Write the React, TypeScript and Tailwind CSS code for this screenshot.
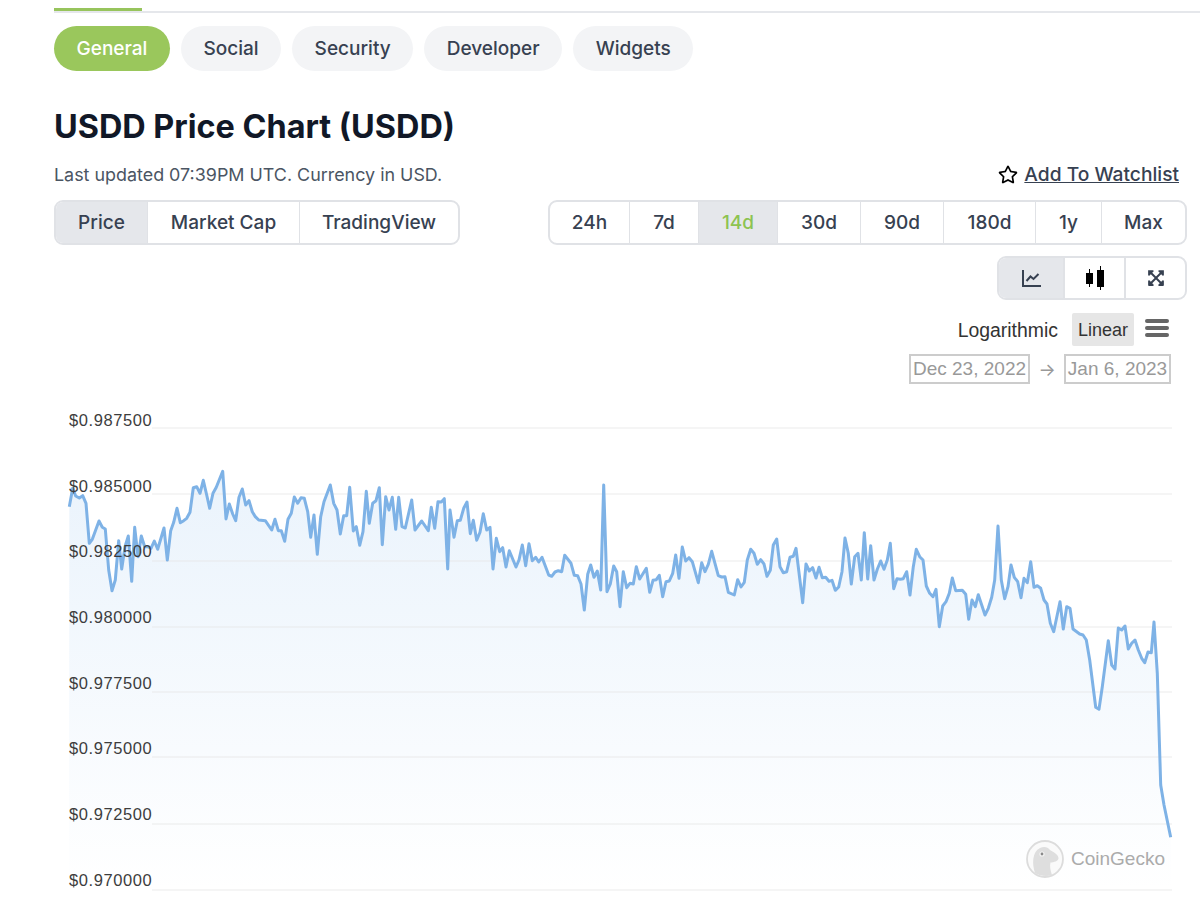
import React from "react";
import { FaRegStar, FaExpandArrowsAlt } from "react-icons/fa";

// points read off the reference at 3x, [x, y] pairs per crop
const seg1 = [58,320,68,265,77,288,88,294,98,287,108,310,118,430,127,418,137,390,147,363,157,382,166,387,176,510,186,572,196,540,206,422,215,507,225,440,235,408,245,544,254,382,264,470,274,408,284,440,294,440,303,445,313,423,323,448,342,384,352,480,362,392,371,367,381,325,391,368,401,362,410,355,420,337,430,263,440,260,450,280,460,241,470,285,479,325,489,280,499,262,518,214,528,357,538,312,548,342,557,362,567,292,577,267,587,315,597,302,607,335,616,350,626,360,646,362,665,390,675,358,685,392,694,392,704,424,714,358,724,340,733,291,743,310,753,293,763,295,773,335,782,412,792,345,802,463,812,350,822,305,841,255,851,310,861,330,871,402,881,347,890,347,899,262,910,393,919,380,929,436,939,395,949,274,958,370,968,310,978,302,988,263,997,434,1007,290,1017,330,1027,292,1037,388,1046,292,1056,380,1066,384,1085,300,1095,390,1115,363,1135,392,1144,322,1154,385,1164,305,1174,306,1183,296,1193,507];
const seg2 = [0,210,12,292,22,242,31,241,41,205,51,186,61,281,70,241,80,301,90,277,100,221,110,270,120,262,129,387,139,295,149,335,158,323,168,381,178,332,198,381,207,360,217,315,227,377,237,311,247,362,257,352,266,366,276,352,296,405,305,409,315,396,325,392,335,395,344,346,363,370,373,406,383,407,393,432,403,510,413,403,422,375,432,412,442,393,452,450,461,135,471,455,481,432,491,378,500,395,510,500,520,395,530,443,540,430,550,432,559,380,569,417,589,385,599,457,609,421,619,419,628,406,638,470,648,425,658,423,668,400,677,345,687,415,697,321,707,363,717,353,727,365,745,428,755,368,765,395,775,373,785,334,805,407,815,411,825,410,835,457,853,465,863,419,873,441,883,427,892,360,902,328,912,340,922,373,932,359,942,372,951,409,961,391,970,315,980,297,990,380,1000,398,1010,395,1020,352,1030,349,1038,325,1058,488,1068,372,1078,393,1088,383,1098,414,1107,382,1117,413,1127,412,1137,424,1146,421,1156,451,1166,441,1176,395,1185,294,1195,340];
const seg3 = [34,252,44,170,54,160,64,240,73,98,83,237,92,137,102,240,112,208,122,183,132,208,142,180,151,130,161,266,171,236,181,238,190,236,200,215,210,285,220,200,229,148,239,170,249,180,259,258,269,280,279,290,288,268,298,380,308,318,318,305,328,280,337,234,347,272,367,271,377,283,386,358,396,300,406,320,415,284,425,315,435,345,445,325,455,292,464,240,474,78,484,240,494,296,504,260,513,195,523,232,533,245,543,293,552,235,562,248,572,185,582,262,592,257,602,265,612,300,621,312,631,370,641,395,660,305,670,387,680,320,690,325,699,387,719,402,729,405,739,420,749,480,767,622,777,628,787,560,805,422,815,495,825,507,835,384,845,390,855,378,865,447,875,430,885,420,895,450,905,475,914,488,924,456,934,458,942,366,952,520,962,855,972,915,992,1012];

const toPoints = (vals: number[], ox: number, oy: number) => {
  const out: string[] = [];
  for (let i = 0; i < vals.length; i += 2) {
    out.push(`${(vals[i] / 3 + ox).toFixed(1)},${(vals[i + 1] / 3 + oy - 400).toFixed(1)}`);
  }
  return out;
};

const line = [
  ...toPoints(seg1, 50, 400),
  ...toPoints(seg2, 450, 440),
  ...toPoints(seg3, 840, 500),
].join(" ");

const gridLines = [28, 94, 161, 227, 292, 357, 424, 490];
const labels = ["$0.987500", "$0.985000", "$0.982500", "$0.980000", "$0.977500", "$0.975000", "$0.972500", "$0.970000"];

const tabs = ["General", "Social", "Security", "Developer", "Widgets"];
const views = [
  { label: "Price", width: "w-[91px]" },
  { label: "Market Cap", width: "w-[152px]" },
  { label: "TradingView", width: "w-[159px]" },
];
const ranges = [
  { label: "24h", width: "w-[79px]" },
  { label: "7d", width: "w-[69px]" },
  { label: "14d", width: "w-[79px]" },
  { label: "30d", width: "w-[83px]" },
  { label: "90d", width: "w-[83px]" },
  { label: "180d", width: "w-[92px]" },
  { label: "1y", width: "w-[66px]" },
  { label: "Max", width: "w-[84px]" },
];

const LineIcon = () => (
  <svg viewBox="0 0 19 17" className="w-[19px] h-[17px]" fill="none" stroke="#374151" strokeWidth="2">
    <path d="M1 0v16h18" />
    <path d="M4.500 11l4-4.500 3 2.500 5-5" />
  </svg>
);

const CandleIcon = () => (
  <svg viewBox="0 0 18 24" className="w-[18px] h-[24px]" fill="#000" stroke="#000">
    <path d="M3.500 3v18M14.500 0v24" strokeWidth="1" />
    <rect x="0" y="7" width="7" height="11" stroke="none" />
    <rect x="11" y="4" width="7" height="17" stroke="none" />
  </svg>
);

const GeckoLogo = () => (
  <svg viewBox="0 0 38 38" className="w-[38px] h-[38px]">
    <circle cx="19" cy="19" r="18" fill="#fafafa" stroke="#dcdcdc" strokeWidth="1.800" />
    <path d="M9 33C6 24 6 12 14 8c4-2 8-1 10 2 3 2 8 4 8.500 8 .3 3-5 4.500-8 4.500-1 4 0 8 1.500 12.500-5 2-12.500 1-17-2z" fill="#dedede" />
    <circle cx="16" cy="14" r="2.600" fill="#f4f4f4" />
    <circle cx="16" cy="14" r="1.400" fill="#8a8a8a" />
  </svg>
);

export default function App() {
  return (
    <div className="w-[1200px] h-[921px] overflow-hidden bg-white font-['Inter',sans-serif]">
      <div className="pt-2 pl-[54px]">
        <div className="w-[88px] h-[2.5px] bg-[#97c45c]" />
        <div className="h-[2px] bg-[#e5e7eb]" />
      </div>

      <div className="pl-[54px] pr-[13px]">
        <div className="mt-[13.500px] flex gap-[11px]">
          {tabs.map((t, i) => (
            <div
              key={t}
              className={`h-[45px] px-[22.500px] pt-[2px] flex items-center rounded-[23px] text-[19.050px] font-medium ${
                i === 0 ? "bg-[#9ac75c] text-white" : "bg-[#f3f4f6] text-[#374151]"
              }`}
            >
              {t}
            </div>
          ))}
        </div>

        <h1 className="mt-[36px] text-[32.400px] leading-[40px] font-bold text-[#111827]">USDD Price Chart (USDD)</h1>

        <div className="mt-[15px] h-6 flex items-center justify-between pr-[8px]">
          <span className="mt-[2px] text-[17.900px] text-[#4b5563]">Last updated 07:39PM UTC. Currency in USD.</span>
          <span className="mt-[1px] flex items-center gap-[6px] text-[19.200px] font-medium text-[#374151]">
            <FaRegStar className="w-[20px] h-[19px] text-black" />
            <span className="underline">Add To Watchlist</span>
          </span>
        </div>

        <div className="mt-[14px] flex justify-between">
          <div className="h-[45px] flex border-2 border-[#e0e2e6] rounded-[9px] overflow-hidden text-[19.050px] font-medium text-[#374151]">
            {views.map((v, i) => (
              <div
                key={v.label}
                className={`${v.width} pt-[2px] flex items-center justify-center ${i > 0 ? "border-l-[1.5px] border-[#e0e2e6]" : "bg-[#e5e7eb]"}`}
              >
                {v.label}
              </div>
            ))}
          </div>
          <div className="h-[45px] flex border-2 border-[#e0e2e6] rounded-[9px] overflow-hidden text-[19.050px] font-medium text-[#374151]">
            {ranges.map((r, i) => (
              <div
                key={r.label}
                className={`${r.width} pt-[2px] flex items-center justify-center ${i > 0 ? "border-l-[1.5px] border-[#e0e2e6]" : ""} ${
                  r.label === "14d" ? "bg-[#e5e7eb] text-[#8dc351]" : ""
                }`}
              >
                {r.label}
              </div>
            ))}
          </div>
        </div>

        <div className="mt-[11px] flex justify-end">
          <div className="h-[44px] flex border-2 border-[#e0e2e6] rounded-[9px] overflow-hidden">
            <div className="w-[64px] flex items-center justify-center bg-[#e5e7eb]">
              <LineIcon />
            </div>
            <div className="w-[61px] flex items-center justify-center border-l-2 border-[#e0e2e6]">
              <CandleIcon />
            </div>
            <div className="w-[61px] flex items-center justify-center border-l-2 border-[#e0e2e6]">
              <FaExpandArrowsAlt className="w-[18px] h-[18px] text-[#374151]" />
            </div>
          </div>
        </div>

        <div className="mt-[13px] h-[33px] flex items-center justify-end pr-[18px] font-['Liberation_Sans',sans-serif] text-[18px] text-[#333]">
          <span className="mr-[14px] pt-[2px] text-[19.400px]">Logarithmic</span>
          <span className="h-[33px] px-[6px] pt-[2px] flex items-center bg-[#e6e6e6] rounded-[2px]">Linear</span>
          <div className="ml-[11px] mb-[4px] w-[24px] flex flex-col gap-[3px]">
            <div className="h-[4px] rounded-[2px] bg-[#666]" />
            <div className="h-[4px] rounded-[2px] bg-[#666]" />
            <div className="h-[4px] rounded-[2px] bg-[#666]" />
          </div>
        </div>

        <div className="mt-2 h-[30px] flex items-center justify-end pr-[16px] font-['Liberation_Sans',sans-serif] text-[19px] text-[#999]">
          <span className="h-[30px] w-[121px] flex items-center justify-center border-2 border-[#ccc]">Dec 23, 2022</span>
          <span className="w-[34px] text-center font-['Inter',sans-serif] text-[18px] text-[#999]">→</span>
          <span className="h-[30px] w-[107px] flex items-center justify-center border-2 border-[#ccc]">Jan 6, 2023</span>
        </div>
      </div>

      <div className="relative mt-[16px] h-[521px]">
        <svg viewBox="0 0 1200 521" className="absolute inset-0 w-[1200px] h-[521px]">
          <defs>
            <linearGradient id="area" x1="0" y1="0" x2="0" y2="1">
              <stop offset="0" stopColor="#7cb5ec" stopOpacity="0.16" />
              <stop offset="1" stopColor="#7cb5ec" stopOpacity="0" />
            </linearGradient>
          </defs>
          <polygon points={`${line} 1171,490 69,490`} fill="url(#area)" />
          {gridLines.map((y) => (
            <line key={y} x1="152" x2="1172" y1={y} y2={y} stroke="#e6e6e6" strokeOpacity="0.8" />
          ))}
          <polyline points={line} fill="none" stroke="#7eb2e6" strokeWidth="3" strokeLinejoin="round" />
        </svg>
        <div className="relative pl-[69px] flex flex-col text-[16.500px] leading-[20px] text-[#3d3d3d] font-['Liberation_Sans',sans-serif]">
          {labels.map((l) => (
            <span key={l} className="h-[65.700px] pt-[10px] tracking-[0.6px]">
              {l}
            </span>
          ))}
        </div>
        <div className="absolute left-[1026px] top-[440px] flex items-center gap-[7px]">
          <GeckoLogo />
          <span className="font-['Liberation_Sans',sans-serif] text-[19px] text-[#ababab]">CoinGecko</span>
        </div>
      </div>
    </div>
  );
}
